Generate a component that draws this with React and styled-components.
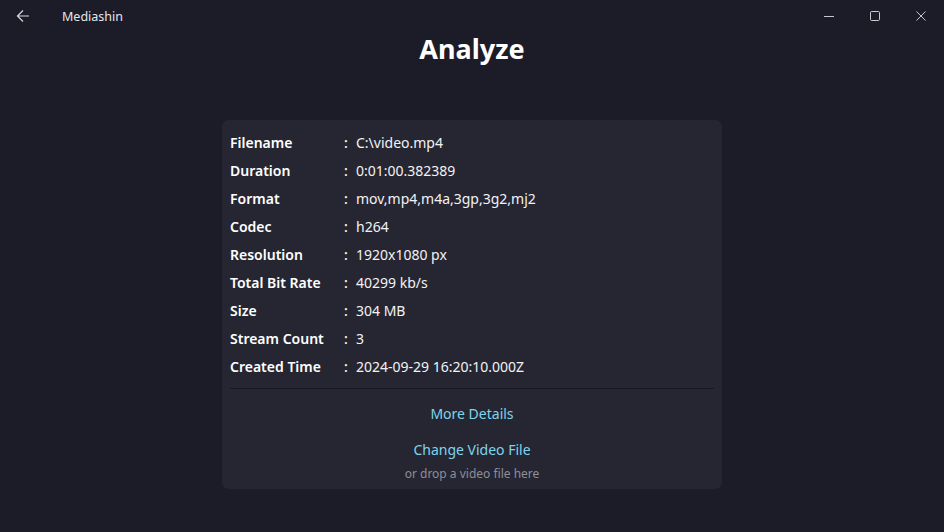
import React from "react";
import styled, { createGlobalStyle } from "styled-components";

const Global = createGlobalStyle`
  html, body { margin: 0; padding: 0; background: #1c1c29; }
  body { font-family: "Noto Sans", "Open Sans", sans-serif; color: #ffffff; }
  * { box-sizing: border-box; }
`;

const Page = styled.div`
  width: 944px;
  height: 532px;
  background: #1c1c29;
  display: flex;
  flex-direction: column;
`;

const TitleBar = styled.div`
  height: 32px;
  display: flex;
  align-items: center;
`;

const BackButton = styled.div`
  width: 46px;
  height: 32px;
  display: flex;
  align-items: center;
  justify-content: center;
  color: #d8d8dc;
`;

const AppName = styled.div`
  margin-left: 16px;
  font-size: 12.5px;
  color: #e6e6ea;
  flex: 1;
`;

const WinButton = styled.div`
  width: 46px;
  height: 32px;
  display: flex;
  align-items: center;
  justify-content: center;
  color: #c8c8cc;
`;

const Title = styled.h1`
  margin: 0;
  text-align: center;
  font-size: 27px;
  font-weight: 700;
  line-height: 34px;
  color: #ffffff;
`;

const Card = styled.div`
  margin: 54px auto 0;
  width: 500px;
  height: 369px;
  background: #262633;
  border-radius: 7px;
  padding: 8px 8px 0;
  display: flex;
  flex-direction: column;
`;

const Row = styled.div`
  display: flex;
  height: 28px;
  align-items: center;
  font-size: 14px;
`;

const Label = styled.div`
  width: 114px;
  font-weight: 600;
  color: #ffffff;
`;

const Colon = styled.div`
  width: 12px;
  color: #ffffff;
  font-weight: 500;
`;

const Value = styled.div`
  color: #f2f2f4;
`;

const Divider = styled.div`
  height: 1px;
  background: #181824;
  margin: 8px 0 0;
`;

const Link = styled.div`
  text-align: center;
  font-size: 14px;
  color: #7fd4ec;
  line-height: 20px;
  margin-top: ${(p) => p.$mt}px;
`;

const Hint = styled.div`
  text-align: center;
  font-size: 12px;
  color: #8e8e98;
  line-height: 16px;
  margin-top: 6px;
`;

const rows = [
  ["Filename", "C:\\video.mp4"],
  ["Duration", "0:01:00.382389"],
  ["Format", "mov,mp4,m4a,3gp,3g2,mj2"],
  ["Codec", "h264"],
  ["Resolution", "1920x1080 px"],
  ["Total Bit Rate", "40299 kb/s"],
  ["Size", "304 MB"],
  ["Stream Count", "3"],
  ["Created Time", "2024-09-29 16:20:10.000Z"],
];

export default function App() {
  return (
    <Page>
      <Global />
      <TitleBar>
        <BackButton>
          <svg width="14" height="14" viewBox="0 0 14 14" fill="none" stroke="currentColor" strokeWidth="1.2">
            <path d="M13 7H1.5M7 1.5L1.5 7L7 12.5" />
          </svg>
        </BackButton>
        <AppName>Mediashin</AppName>
        <WinButton>
          <svg width="10" height="10" viewBox="0 0 10 10" fill="none" stroke="currentColor" strokeWidth="1">
            <path d="M0 5.5H10" />
          </svg>
        </WinButton>
        <WinButton>
          <svg width="10" height="10" viewBox="0 0 10 10" fill="none" stroke="currentColor" strokeWidth="1">
            <rect x="0.5" y="0.5" width="9" height="9" rx="1.2" />
          </svg>
        </WinButton>
        <WinButton>
          <svg width="10" height="10" viewBox="0 0 10 10" fill="none" stroke="currentColor" strokeWidth="1">
            <path d="M0.5 0.5L9.5 9.5M9.5 0.5L0.5 9.5" />
          </svg>
        </WinButton>
      </TitleBar>
      <Title>Analyze</Title>
      <Card>
        {rows.map(([l, v]) => (
          <Row key={l}>
            <Label>{l}</Label>
            <Colon>:</Colon>
            <Value>{v}</Value>
          </Row>
        ))}
        <Divider />
        <Link $mt={15}>More Details</Link>
        <Link $mt={16}>Change Video File</Link>
        <Hint>or drop a video file here</Hint>
      </Card>
    </Page>
  );
}
